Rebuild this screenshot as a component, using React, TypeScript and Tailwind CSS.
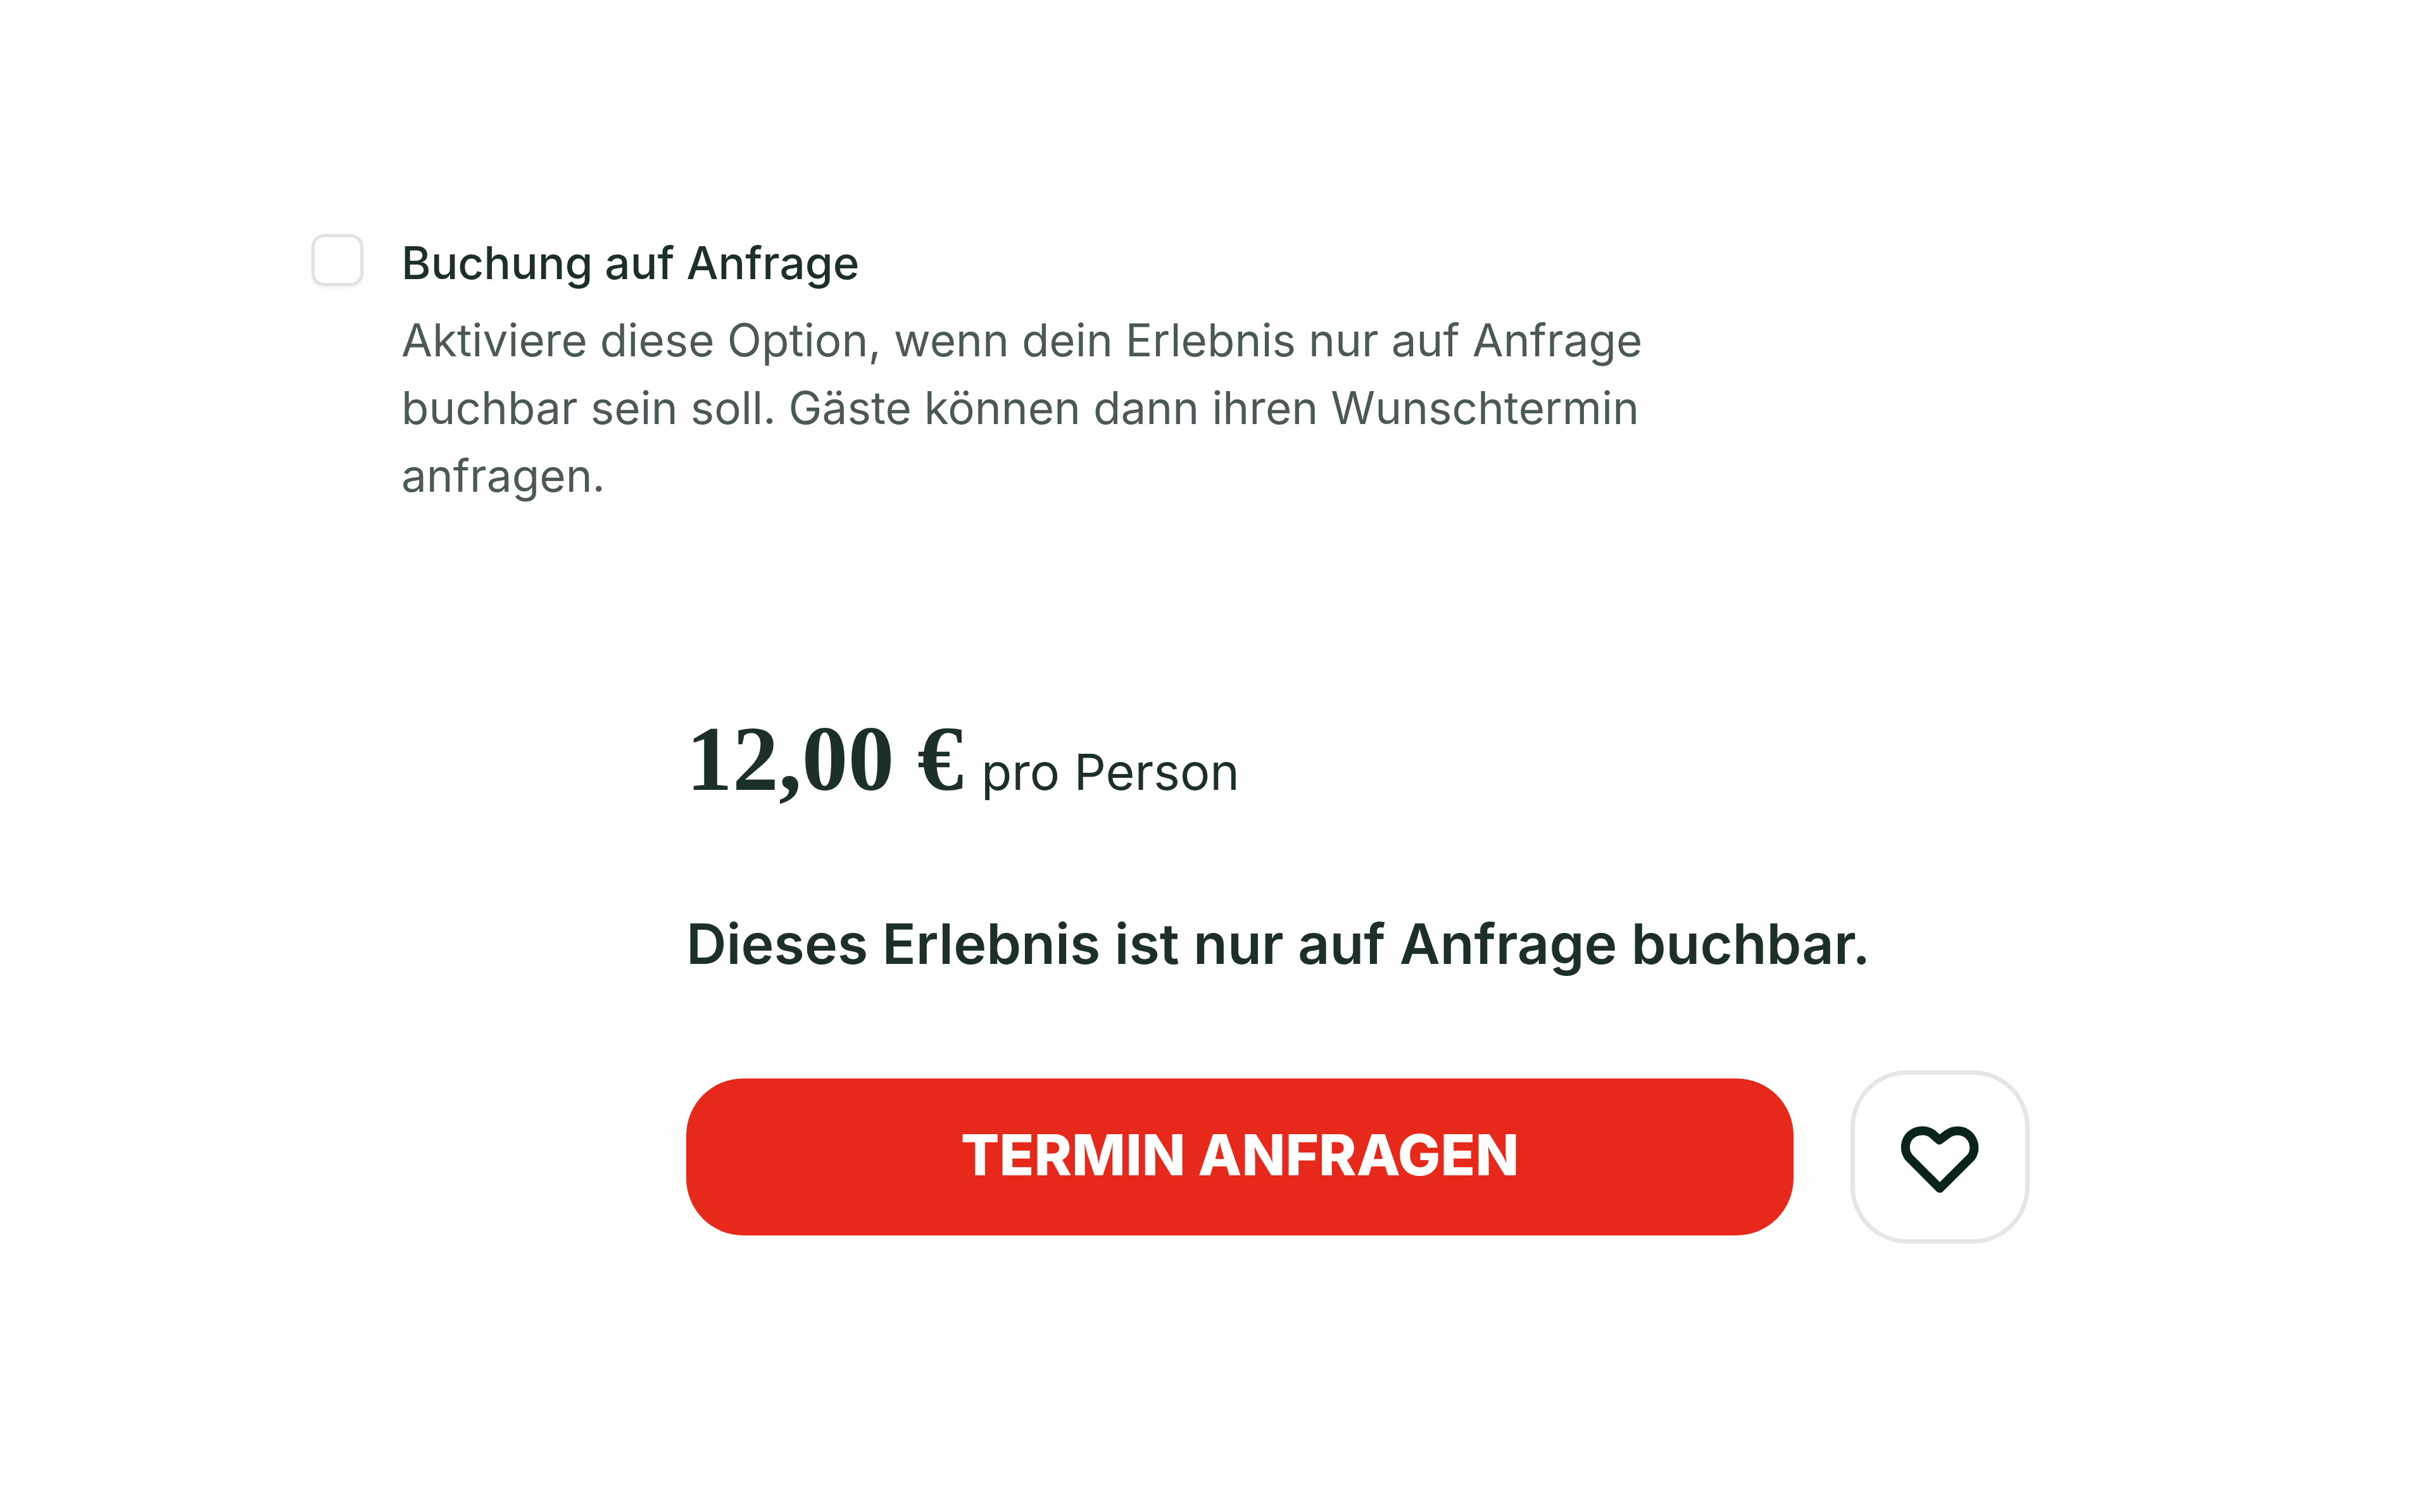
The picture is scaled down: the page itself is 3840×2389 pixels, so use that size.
import React, { useState } from 'react';

const HeartIcon = () => (
    <svg viewBox="363 334 378 336" className="w-[126px] h-[112px]" fill="none" stroke="currentColor" strokeWidth="42" aria-hidden="true">
        <path
            strokeLinejoin="round"
            d="M549 645 L402 497 C378 464 383 420 409 394 C438 366 484 366 513 386 L547 416 L585 388 C614 366 660 366 688 394 C714 420 721 464 698 497 Z"
        />
    </svg>
);

const App = () => {
    const [onRequest, setOnRequest] = useState(false);
    const [isFavorite, setIsFavorite] = useState(false);

    return (
        <main className="min-h-screen bg-[#fefefe] pt-[370px] pb-[240px] font-['Inter',sans-serif] text-[#1d3028]">
            <section className="flex items-start gap-[60px] pl-[492px] pr-[634px]">
                <input
                    id="on-request"
                    type="checkbox"
                    checked={onRequest}
                    onChange={(e) => setOnRequest(e.target.checked)}
                    aria-describedby="on-request-hint"
                    className="size-[82px] shrink-0 appearance-none rounded-[20px] border-[5px] border-[#e0e3e1] bg-white shadow-[0_4px_6px_rgba(0,0,0,0.04)] checked:bg-[#e6291b]"
                />
                <div className="max-w-[2000px]">
                    <label htmlFor="on-request" className="block text-[71px] leading-[90px] font-medium">
                        Buchung auf Anfrage
                    </label>
                    <p id="on-request-hint" className="mt-[24px] text-[71px] leading-[107px] text-[#4a5a53]">
                        Aktiviere diese Option, wenn dein Erlebnis nur auf Anfrage buchbar sein soll. Gäste können dann ihren Wunschtermin anfragen.
                    </p>
                </div>
            </section>

            <section className="mt-[314px] pl-[1084px] pr-[634px]">
                <p className="flex items-baseline gap-[28px]">
                    <span className="font-['Liberation_Serif',serif] text-[146px] leading-[160px] font-bold">12,00 €</span>
                    <span className="text-[79px] leading-[120px]">pro Person</span>
                </p>
                <p className="mt-[152px] text-[88px] leading-[120px] font-semibold">
                    Dieses Erlebnis ist nur auf Anfrage buchbar.
                </p>
                <div className="mt-[140px] flex items-center gap-[90px]">
                    <button
                        type="button"
                        className="h-[248px] flex-1 rounded-[90px] bg-[#e6291b] pb-[6px] text-[90px] leading-[120px] font-extrabold text-white uppercase"
                    >
                        Termin anfragen
                    </button>
                    <button
                        type="button"
                        aria-label="Zur Merkliste hinzufügen"
                        aria-pressed={isFavorite}
                        onClick={() => setIsFavorite(!isFavorite)}
                        className="flex h-[274px] w-[283px] items-center justify-center rounded-[90px] border-[7px] border-[#e5e7e6] bg-white pt-[4px] text-[#0b2419]"
                    >
                        <HeartIcon />
                    </button>
                </div>
            </section>
        </main>
    );
};

export default App;
